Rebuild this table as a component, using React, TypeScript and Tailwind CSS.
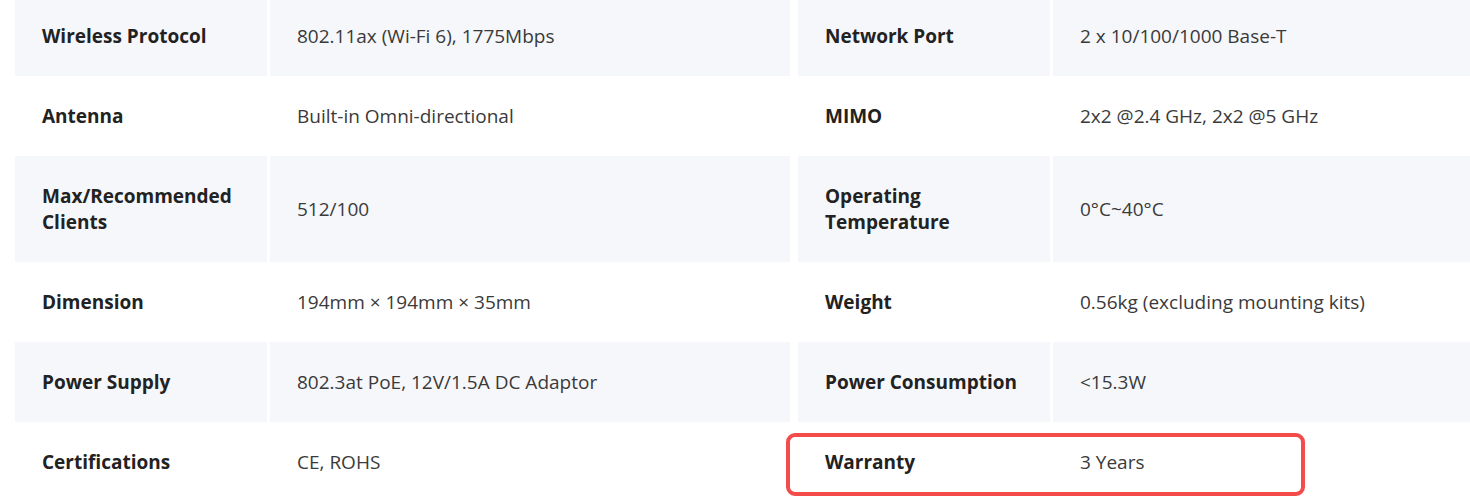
const LEFT_SPECS: [string, string][] = [
  ['Wireless Protocol', '802.11ax (Wi-Fi 6), 1775Mbps'],
  ['Antenna', 'Built-in Omni-directional'],
  ['Max/Recommended Clients', '512/100'],
  ['Dimension', '194mm × 194mm × 35mm'],
  ['Power Supply', '802.3at PoE, 12V/1.5A DC Adaptor'],
  ['Certifications', 'CE, ROHS'],
];

const RIGHT_SPECS: [string, string][] = [
  ['Network Port', '2 x 10/100/1000 Base-T'],
  ['MIMO', '2x2 @2.4 GHz, 2x2 @5 GHz'],
  ['Operating Temperature', '0°C~40°C'],
  ['Weight', '0.56kg (excluding mounting kits)'],
  ['Power Consumption', '<15.3W'],
  ['Warranty', '3 Years'],
];

function SpecTable({ rows, highlightLast }: { rows: [string, string][]; highlightLast?: boolean }) {
  return (
    <div className="w-[775px] flex-shrink-0">
      {rows.map(([label, value], index) => {
        const shaded = index % 2 === 0;
        const cellBg = shaded ? 'bg-[#f6f7fb]' : 'bg-white';
        return (
          <div key={label} className="relative grid grid-cols-[252px_1fr] gap-x-[3px]">
            <div
              className={`${cellBg} pl-[27px] pr-[16px] py-[27px] text-[19px] leading-[26px] font-bold text-[#222222] flex items-center`}
            >
              {label}
            </div>
            <div
              className={`${cellBg} pl-[27px] pr-[16px] py-[27px] text-[19px] leading-[26px] text-[#3a3a3a] flex items-center`}
            >
              {value}
            </div>
            {highlightLast && index === rows.length - 1 && (
              <div className="absolute left-[-12px] top-[11px] w-[519px] h-[63px] border-[4px] border-[#f44b4b] rounded-[9px]" />
            )}
          </div>
        );
      })}
    </div>
  );
}

export default function App() {
  return (
    <div
      className="w-[1470px] h-[503px] overflow-hidden bg-white"
      style={{ fontFamily: '"Open Sans", "Noto Sans", sans-serif' }}
    >
      <div className="flex gap-x-[8px] pl-[15px] -mt-[4px]">
        <SpecTable rows={LEFT_SPECS} />
        <SpecTable rows={RIGHT_SPECS} highlightLast />
      </div>
    </div>
  );
}
